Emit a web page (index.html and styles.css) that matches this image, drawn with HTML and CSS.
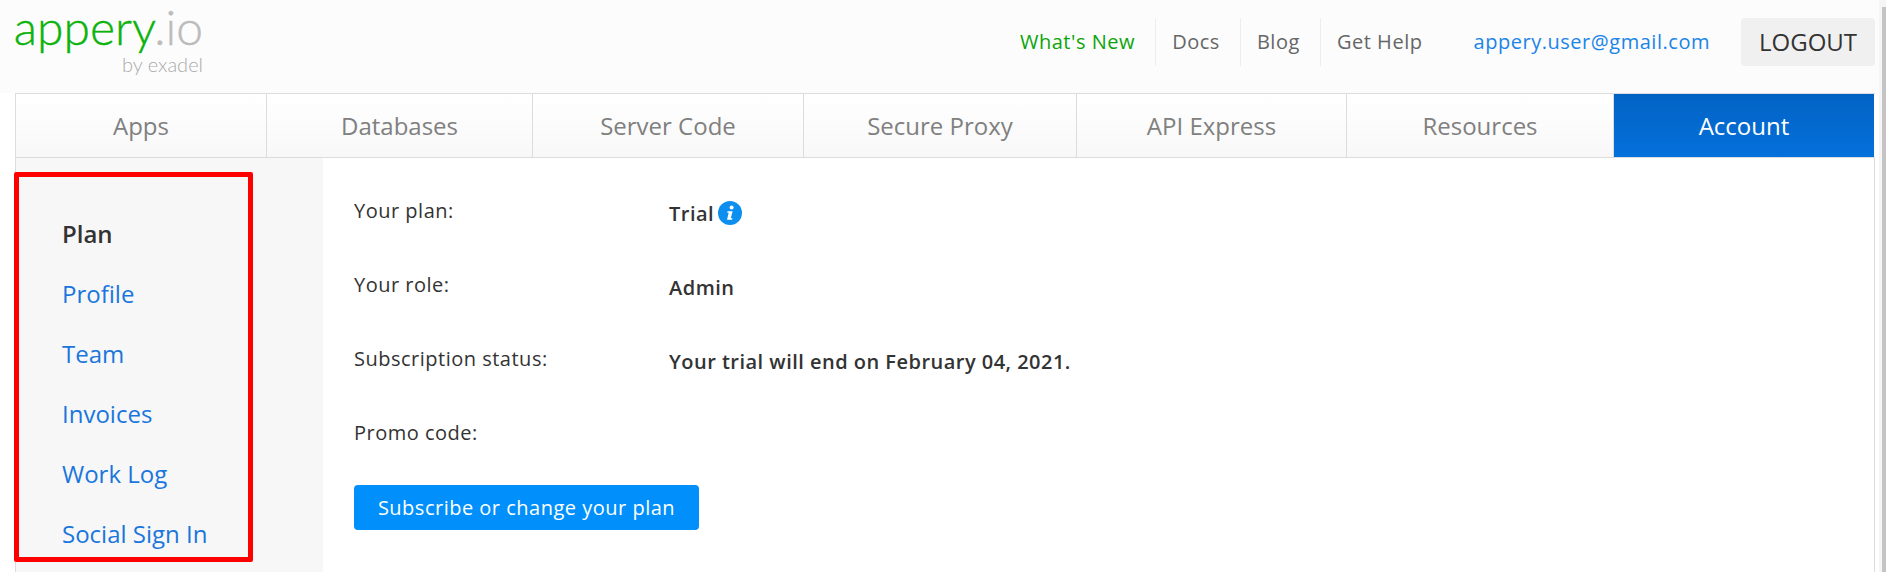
FILE: index.html
```html
<!DOCTYPE html>
<html lang="en">
<head>
    <meta charset="UTF-8">
    <title>Appery.io - Account</title>
    <link rel="stylesheet" href="styles.css">
</head>
<body>

    <div class="window">
        <!-- Top bar -->
        <header class="topbar">
            <a class="logo" href="#">
                <span class="logo-name"><span class="logo-green">appery</span><span class="logo-gray">.io</span></span>
                <span class="logo-by">by exadel</span>
            </a>
            <nav class="toplinks">
                <a class="toplink whats-new" href="#">What's New</a>
                <a class="toplink" href="#">Docs</a>
                <a class="toplink" href="#">Blog</a>
                <a class="toplink" href="#">Get Help</a>
                <a class="user-mail" href="#">appery.user@gmail.com</a>
                <a class="logout" href="#">LOGOUT</a>
            </nav>
        </header>

        <!-- Main tabs -->
        <nav class="tabs">
            <a class="tab tab-apps" href="#">Apps</a>
            <a class="tab tab-db" href="#">Databases</a>
            <a class="tab tab-code" href="#">Server Code</a>
            <a class="tab tab-proxy" href="#">Secure Proxy</a>
            <a class="tab tab-api" href="#">API Express</a>
            <a class="tab tab-res" href="#">Resources</a>
            <a class="tab tab-account" href="#">Account</a>
        </nav>

        <div class="page">
            <aside class="sidebar">
                <ul class="side-menu">
                    <li class="current">Plan</li>
                    <li><a href="#">Profile</a></li>
                    <li><a href="#">Team</a></li>
                    <li><a href="#">Invoices</a></li>
                    <li><a href="#">Work Log</a></li>
                    <li><a href="#">Social Sign In</a></li>
                </ul>
                <!-- Red annotation box -->
                <div class="highlight"></div>
            </aside>

            <main class="content">
                <div class="row">
                    <div class="label">Your plan:</div>
                    <div class="value">Trial
                        <svg class="info" viewBox="0 0 24 24" width="24" height="24">
                            <circle cx="12" cy="12" r="12" fill="#0d8ff0"/>
                            <circle cx="13.6" cy="6.4" r="2" fill="#fff"/>
                            <path d="M9.6 10.2h5l-1.8 7h1.7l-.4 1.6H9l1.7-7H9.2z" fill="#fff"/>
                        </svg>
                    </div>
                </div>
                <div class="row">
                    <div class="label">Your role:</div>
                    <div class="value">Admin</div>
                </div>
                <div class="row">
                    <div class="label">Subscription status:</div>
                    <div class="value">Your trial will end on February 04, 2021.</div>
                </div>
                <div class="row">
                    <div class="label">Promo code:</div>
                </div>
                <a class="subscribe" href="#">Subscribe or change your plan</a>
            </main>
        </div>
    </div>

    <!-- Scrollbar on the right edge -->
    <div class="scroll-track"><div class="scroll-thumb"></div></div>

</body>
</html>
```

FILE: styles.css
```css
html, body {
    height: 100%;
}
body {
    margin: 0;
    overflow: hidden;
    display: flex;
    background-color: #fff;
    font-family: "Open Sans", Arial, sans-serif;
    color: #333;
}
a {
    text-decoration: none;
}
.window {
    flex: 1;
    min-width: 0;
}
.scroll-track {
    width: 7px;
    box-sizing: border-box;
    padding: 7px 0 0 3px;
    background-color: #f5f5f5;
}
.scroll-thumb {
    height: 100%;
    background-color: #c4c4c4;
}

/* Top bar */
.topbar {
    height: 93px;
    box-sizing: border-box;
    padding: 0 4px 0 15px;
    display: flex;
    justify-content: space-between;
    background-color: #fcfcfc;
}
.logo {
    display: flex;
    flex-direction: column;
    align-items: flex-end;
    width: 188px;
    padding-top: 2px;
}
.logo-name {
    height: 50px;
    font-family: Lato, sans-serif;
    font-weight: 300;
    font-size: 48px;
    line-height: 50px;
    -webkit-text-stroke: 0.4px;
}
.logo-green {
    color: #0cb30c;
}
.logo-gray {
    color: #bbb;
}
.logo-by {
    margin-top: 2px;
    font-family: Lato, sans-serif;
    font-weight: 300;
    font-size: 20px;
    line-height: 20px;
    color: #aaa;
}
.toplinks {
    display: flex;
    align-items: flex-start;
    padding-top: 18px;
    font-size: 20px;
    letter-spacing: 0.53px;
    line-height: 48px;
}
.toplink {
    height: 48px;
    padding: 0 20px 0 16px;
    border-right: 1px solid #eee;
    color: #666;
}
.toplink:nth-child(4) {
    border-right: 0;
}
.whats-new {
    color: #0aa50a;
}
.user-mail {
    margin-left: 31px;
    margin-right: 31px;
    color: #1a84e8;
}
.logout {
    width: 134px;
    height: 48px;
    text-align: center;
    font-size: 24px;
    letter-spacing: 0;
    border-radius: 4px;
    background-color: #f0f0f0;
    color: #333;
}

/* Tabs */
.tabs {
    display: flex;
    height: 65px;
    box-sizing: border-box;
    margin: 0 4px 0 15px;
    border: 1px solid #dcdcdc;
    border-width: 1px 0 1px 1px;
    background: linear-gradient(#fff, #f8f8f8);
}
.tab {
    box-sizing: border-box;
    border-right: 1px solid #dcdcdc;
    text-align: center;
    font-size: 24px;
    line-height: 63px;
    color: #808080;
}
.tab-apps { width: 251px; }
.tab-db { width: 266px; }
.tab-code { width: 271px; }
.tab-proxy { width: 273px; }
.tab-api { width: 270px; }
.tab-res { width: 267px; }
.tab-account {
    width: 260px;
    border-right: 0;
    color: #fff;
    background: linear-gradient(#0263c4, #0570db);
}

/* Page body */
.page {
    display: flex;
    height: 414px;
    margin: 0 4px 0 15px;
    border-right: 1px solid #dcdcdc;
}
.sidebar {
    position: relative;
    width: 308px;
    box-sizing: border-box;
    border-left: 1px solid #dcdcdc;
    background-color: #f7f7f7;
}
.side-menu {
    list-style: none;
    margin: 0;
    padding: 46px 0 0 46px;
    font-size: 24px;
    line-height: 60px;
}
.side-menu a {
    color: #1a76dd;
}
.current {
    font-weight: 600;
    color: #333;
}
.highlight {
    position: absolute;
    left: -2px;
    top: 14px;
    width: 229px;
    height: 380px;
    border: 5px solid #f00;
    border-radius: 2px;
}
.content {
    flex: 1;
    padding: 37px 0 0 31px;
    font-size: 20px;
    letter-spacing: 0.5px;
}
.row {
    display: flex;
    height: 74px;
}
.label {
    width: 315px;
    line-height: 32px;
}
.value {
    display: flex;
    align-items: center;
    height: 32px;
    margin-top: 2px;
    gap: 4px;
    font-weight: 600;
    letter-spacing: 0.48px;
}
.subscribe {
    display: block;
    width: 345px;
    height: 45px;
    margin-top: -6px;
    text-align: center;
    line-height: 45px;
    border-radius: 4px;
    color: #fff;
    background-color: #008ffb;
}
```
